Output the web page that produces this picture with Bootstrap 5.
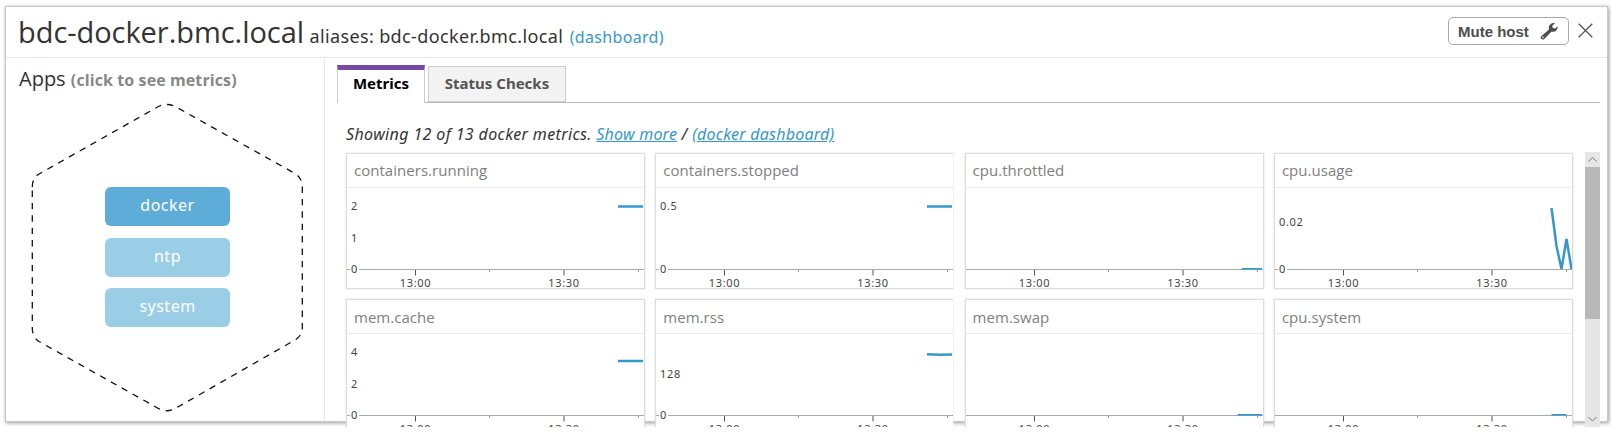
<!DOCTYPE html>
<html lang="en">
<head>
<meta charset="utf-8">
<title>bdc-docker.bmc.local</title>
<link href="https://cdn.jsdelivr.net/npm/bootstrap@5.3.0/dist/css/bootstrap.min.css" rel="stylesheet">
<style>
body{height:434px;overflow:hidden;background:#fff;color:#333;font-family:"Open Sans","Noto Sans",sans-serif;padding:7px 4px 0 6px}
a{color:#3598cc}
.panel{height:414px;box-shadow:0 0 0 1px #c6c6c6,1px 1px 4px 1px #999}
.panel-top{height:51px;border-bottom:1px solid #e8e8e8;padding:0 14px 0 12px}
.host-name{font-size:29px;line-height:49px;letter-spacing:-.05px;font-weight:400;white-space:nowrap}
.alias{font-family:"Noto Sans",sans-serif;font-size:18px;letter-spacing:.37px;margin-left:-2px}
.dash-link{font-family:"Noto Sans",sans-serif;font-size:16px;text-decoration:none;letter-spacing:.33px;margin-left:-1px}
.mute{width:121px;height:28px;margin-top:10px;padding:0 10px 0 9px;border:1.5px solid #aaa;border-radius:5px;background:#fff;color:#4d4d4d;font:bold 15px "Liberation Sans",Arial,sans-serif}
.shut{margin:16px 0 0 9px;border:0;padding:0;background:none;line-height:0}
.side{width:319px;height:363px;border-right:1px solid #e8e8e8}
.side h2{font-size:20px;font-weight:400;line-height:28px;margin:0;padding:7px 0 0 13px}
.side h2 small{font-size:16px;font-weight:700;color:#888;letter-spacing:.1px}
.hex{height:328px}
.hex svg{position:absolute;left:0;top:0}
.apps{position:relative;width:125px;margin-left:99px;padding-top:93px;gap:11.7px}
.app{height:39px;border:0;border-radius:6px;background:#9acde6;color:#fff;font:16px/35px "Noto Sans",sans-serif;letter-spacing:.5px;padding:0 0 2px}
.app.on{background:#5dadd8}
.main-col{padding:7px 7px 0 12px;min-width:0}
.tabs{height:38px;border-bottom:1px solid #bbb;gap:3px;padding:0}
.tab-on,.tab-off{font:bold 15px/32px "Noto Sans",sans-serif;text-align:center;text-decoration:none}
.tab-on{width:88px;height:38px;border:1px solid #ccc;border-top:5px solid #7549a6;border-bottom:0;background:#fff;color:#000;line-height:26px}
.tab-off{width:138px;height:36px;margin-top:1px;border:1px solid #ccc;background:#f3f3f3;color:#555}
.showing{height:49px;padding:19px 0 0 9px;font:italic 16px/24px "Noto Sans",sans-serif;letter-spacing:.37px}
.showing a{letter-spacing:.22px}
.scroller{height:275px;overflow:hidden}
.metrics{display:grid;grid-template-columns:repeat(4,300px);column-gap:9.3px;row-gap:10px;padding:1px 0 0 9px;width:1248px}
.metric{height:136px;border:1px solid #ddd;box-shadow:0 0 2px #ddd;background:#fff;overflow:hidden;margin-right:1px}
.metric:nth-child(4n+2){clip-path:inset(-3px 1px -3px -3px)}
.metric h3{height:34px;margin:0;border-bottom:1px solid #eaeaea;font-size:15px;line-height:33px;font-weight:400;color:#808080;padding-left:7px;letter-spacing:.03px}
.metric:nth-child(n+5) h3{line-height:35px}
.metric svg{display:block}
svg text{font:11px "Noto Sans",sans-serif;letter-spacing:.65px;fill:#444}
.series{fill:none;stroke:#3598cc;stroke-width:2.5}
.series-flat{stroke-width:1.6}
.bar-track{width:15px;background:#e6e6e6}
.bar-thumb{height:152px;background:#b8b8b8}
.bar-track svg{display:block}
</style>
</head>
<body>
<svg width="0" height="0" class="position-absolute">
  <defs>
    <g id="xaxis">
      <path d="M68.5 82v5.5M217 82v5.5" stroke="#555" fill="none"/>
      <path d="M142.5 82v2M291.5 82v2" stroke="#999" fill="none"/>
      <text x="68.5" y="99" text-anchor="middle">13:00</text>
      <text x="217" y="99" text-anchor="middle">13:30</text>
    </g>
    <path id="line-full" d="M0 81.5H298" stroke="#aaa"/>
    <g id="line-zero"><path d="M0 81.5H3M12 81.5H298" stroke="#aaa"/><text x="4" y="85">0</text></g>
  </defs>
</svg>
<div class="panel">
  <header class="panel-top d-flex">
    <h1 class="host-name m-0 flex-grow-1">bdc-docker.bmc.local <span class="alias">aliases: bdc-docker.bmc.local</span> <a class="dash-link" href="#">(dashboard)</a></h1>
    <button class="mute d-flex align-items-center justify-content-between" type="button">Mute host
      <svg width="18" height="18" viewBox="0 0 18 18"><path d="M1.2 14.2 9 7.4C8.1 4 10.300 .9 14 .9l1 .2-2.900 2.800.8 2.200 2.400.4 2.200-2.300C18.200 7.800 15 10.600 11.300 9.700L4.300 17C2.400 18.600-.7 16.200 1.200 14.200Z" fill="#4d4d4d"/><circle cx="2.900" cy="15.400" r=".8" fill="#fff"/></svg>
    </button>
    <button class="shut align-self-start" type="button" aria-label="Close"><svg width="15" height="15"><path d="M.7.7 14.300 14.300M14.300.7.7 14.300" stroke="#555" stroke-width="1.300"/></svg></button>
  </header>
  <div class="d-flex">
    <aside class="side flex-shrink-0">
      <h2>Apps <small>(click to see metrics)</small></h2>
      <div class="hex position-relative">
        <svg width="310" height="328" viewBox="6 94 310 328"><path d="M32.300 187Q32.300 178 39 174L156.700 107.500Q167 101.500 177 107.500L295 173.500Q302.300 178 302.300 187V328Q302.300 335.500 295 340L177 407.500Q167 414 156.700 407.500L39 341.500Q32.300 337 32.300 328Z" fill="none" stroke="#111" stroke-width="1.300" stroke-dasharray="6.400 6"/></svg>
        <div class="apps d-flex flex-column">
          <button class="app on" type="button">docker</button>
          <button class="app" type="button">ntp</button>
          <button class="app" type="button">system</button>
        </div>
      </div>
    </aside>
    <main class="main-col flex-grow-1">
      <nav class="tabs d-flex">
        <a class="tab-on" href="#">Metrics</a>
        <a class="tab-off" href="#">Status Checks</a>
      </nav>
      <p class="showing m-0">Showing 12 of 13 docker metrics. <a href="#">Show more</a> / <a href="#">(docker dashboard)</a></p>
      <div class="d-flex">
        <div class="scroller">
          <div class="metrics">
            <section class="metric"><h3>containers.running</h3><svg width="298" height="100"><use href="#line-zero"/><use href="#xaxis"/><text x="4" y="22">2</text><text x="4" y="54">1</text><path class="series" d="M271 18.500H296"/></svg></section>
            <section class="metric"><h3>containers.stopped</h3><svg width="298" height="100"><use href="#line-zero"/><use href="#xaxis"/><text x="4" y="22">0.5</text><path class="series" d="M271 18.500H296"/></svg></section>
            <section class="metric"><h3>cpu.throttled</h3><svg width="298" height="100"><use href="#line-full"/><use href="#xaxis"/><path class="series series-flat" d="M276 80.800H296"/></svg></section>
            <section class="metric"><h3>cpu.usage</h3><svg width="298" height="100"><use href="#line-zero"/><use href="#xaxis"/><text x="4" y="38">0.02</text><path class="series" d="M276.500 20 281.500 58 286.500 81 291.500 51 296.500 81"/></svg></section>
            <section class="metric"><h3>mem.cache</h3><svg width="298" height="100"><use href="#line-zero"/><use href="#xaxis"/><text x="4" y="22">4</text><text x="4" y="54">2</text><path class="series" d="M271 27H296"/></svg></section>
            <section class="metric"><h3>mem.rss</h3><svg width="298" height="100"><use href="#line-zero"/><use href="#xaxis"/><text x="4" y="44">128</text><path class="series" d="M271 20.200 284 20.700 296 20.500"/></svg></section>
            <section class="metric"><h3>mem.swap</h3><svg width="298" height="100"><use href="#line-full"/><use href="#xaxis"/><path class="series series-flat" d="M271.500 80.800H296"/></svg></section>
            <section class="metric"><h3>cpu.system</h3><svg width="298" height="100"><use href="#line-full"/><use href="#xaxis"/><path class="series series-flat" d="M276.500 80.800H291.500"/></svg></section>
          </div>
        </div>
        <div class="bar-track d-flex flex-column justify-content-between">
          <div><svg width="15" height="15"><path d="M3.500 9.500 7.500 5.500 11.500 9.500" fill="none" stroke="#777"/></svg><div class="bar-thumb"></div></div>
          <svg width="15" height="15"><path d="M3.500 5 7.500 9 11.500 5" fill="none" stroke="#777"/></svg>
        </div>
      </div>
    </main>
  </div>
</div>
<script src="https://cdn.jsdelivr.net/npm/bootstrap@5.3.0/dist/js/bootstrap.bundle.min.js"></script>
</body>
</html>
